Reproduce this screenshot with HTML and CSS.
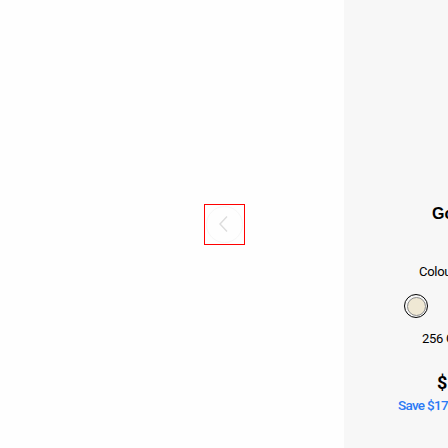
FILE: index.html
```html
<!DOCTYPE html>
<html>
<head>
<meta charset="utf-8">
<link rel="stylesheet" href="styles.css">
</head>
<body>
<div class="page">
  <div class="gallery">
    <button class="prev" aria-label="Previous">
      <svg width="14" height="18" viewBox="0 0 14 18"><path d="M11 1.5 L4 9 L11 16.5" fill="none" stroke="#dcdcdc" stroke-width="1.4"/></svg>
    </button>
  </div>
  <div class="panel">
    <h1 class="title">Google Pixel 8 Pro</h1>
    <p class="label">Colour: Porcelain</p>
    <div class="swatches">
      <span class="swatch selected"><span class="dot cream"></span></span>
      <span class="swatch"><span class="dot grey"></span></span>
    </div>
    <p class="storage">256 GB</p>
    <p class="price">$1,529</p>
    <p class="save">Save $170</p>
  </div>
</div>
</body>
</html>
```
FILE: styles.css
```css
html, body {
  margin: 0;
  padding: 0;
  overflow: hidden;
  background: #fefefe;
}
.page {
  display: flex;
  width: 448px;
  height: 448px;
  overflow: hidden;
}
.gallery {
  flex: 0 0 344px;
  display: flex;
  align-items: center;
  padding-left: 204px;
  box-sizing: border-box;
  background: #fefefe;
}
.prev {
  width: 41px;
  height: 41px;
  margin: 0;
  padding: 0;
  border: 1px solid #ff0000;
  background: transparent;
  display: flex;
  align-items: center;
  justify-content: center;
  position: relative;
}
.prev::before {
  content: "";
  position: absolute;
  left: 1px;
  top: 1px;
  width: 37px;
  height: 37px;
  border-radius: 50%;
  border: 1px solid #f6f6f6;
  box-sizing: border-box;
}
.prev svg {
  margin-left: -3px;
}
.panel {
  flex: 0 0 400px;
  background: #f7f7f7;
  white-space: nowrap;
  font-family: Roboto, "Noto Sans", sans-serif;
  color: #000;
}
.title {
  margin: 204px 0 0 88px;
  font-family: "Liberation Sans", Arial, sans-serif;
  font-weight: 700;
  font-size: 16px;
  line-height: 20px;
  letter-spacing: 0.1px;
}
.label {
  margin: 38px 0 0 75px;
  font-size: 13px;
  line-height: 20px;
  letter-spacing: -0.3px;
}
.swatches {
  display: flex;
  gap: 19px;
  margin: 12px 0 0 60px;
}
.swatch {
  width: 24px;
  height: 24px;
  border-radius: 50%;
  box-sizing: border-box;
  display: flex;
  align-items: center;
  justify-content: center;
}
.swatch.selected {
  border: 1px solid #000;
}
.dot {
  width: 19px;
  height: 19px;
  border-radius: 50%;
  box-sizing: border-box;
  border: 1px solid #8c8c8c;
}
.dot.cream { background: #efe8d4; }
.dot.grey { background: #3a3a3a; }
.storage {
  margin: 11px 0 0 78px;
  font-size: 13px;
  line-height: 20px;
  letter-spacing: -0.3px;
}
.price {
  margin: 23px 0 0 93px;
  font-size: 18px;
  font-weight: 700;
  line-height: 22px;
}
.save {
  margin: 1px 0 0 54px;
  font-size: 13.5px;
  font-weight: 500;
  line-height: 20px;
  letter-spacing: -0.7px;
  color: #2a7af5;
}
```
